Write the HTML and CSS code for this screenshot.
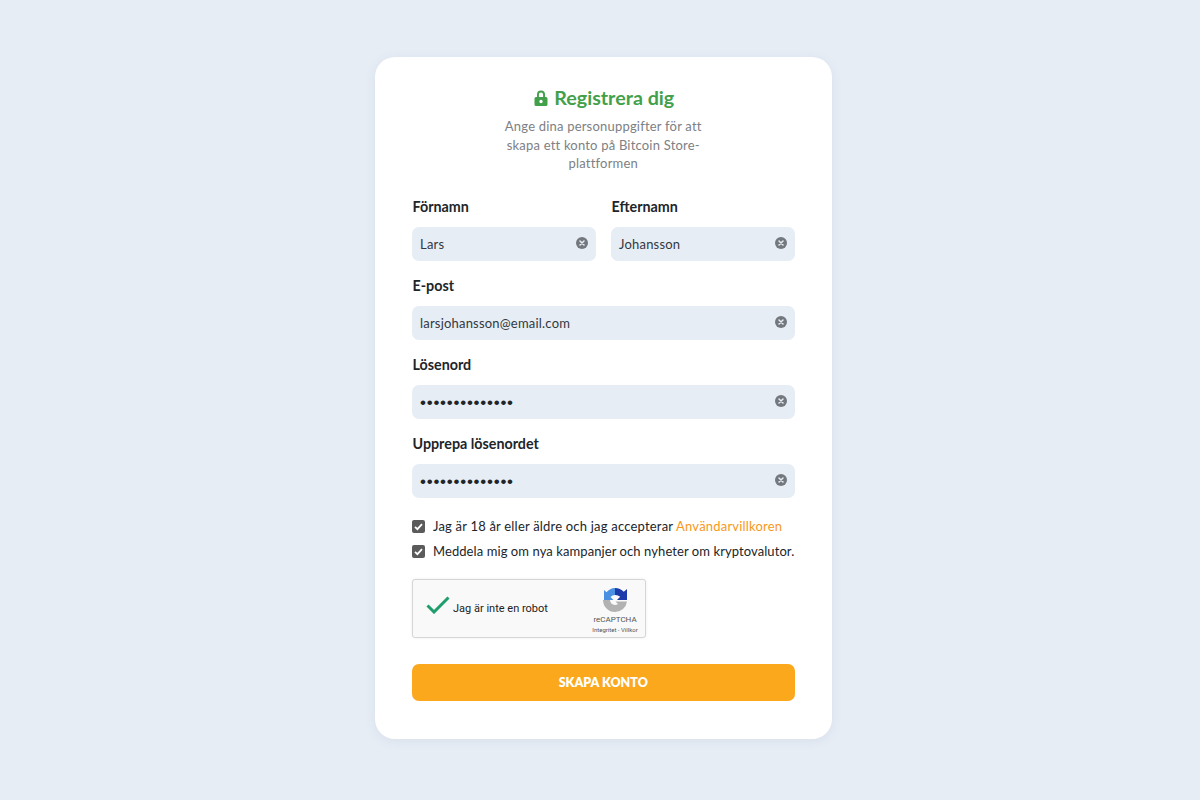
FILE: index.html
```html
<!DOCTYPE html>
<html lang="sv">
<head>
<meta charset="utf-8">
<title>Registrera dig</title>
<link rel="stylesheet" href="styles.css">
</head>
<body>
<main class="card">
  <header class="head">
    <h1 class="title">
      <svg class="lock" viewBox="0 0 14 16" width="14" height="16"><path fill="#43a04a" d="M3 7V4.5a4 4 0 0 1 8 0V7h1a1.500 1.500 0 0 1 1.500 1.500v6A1.500 1.500 0 0 1 12 16H2a1.500 1.500 0 0 1-1.500-1.500v-6A1.500 1.500 0 0 1 2 7zm1.900 0h4.200V4.500a2.100 2.100 0 0 0-4.200 0zM7 9.800a1.700 1.700 0 1 0 0 3.400 1.700 1.700 0 0 0 0-3.400z" fill-rule="evenodd"/></svg>
      Registrera dig
    </h1>
    <p class="sub">Ange dina personuppgifter för att skapa ett konto på Bitcoin Store-plattformen</p>
  </header>

  <div class="row">
    <div class="field">
      <label class="label">Förnamn</label>
      <div class="input"><span class="value">Lars</span><svg class="clear" viewBox="0 0 12 12"><circle cx="6" cy="6" r="6" fill="#73787e"/><path d="M4 4l4 4M8 4l-4 4" stroke="#e6edf5" stroke-width="1.500" stroke-linecap="round"/></svg></div>
    </div>
    <div class="field">
      <label class="label">Efternamn</label>
      <div class="input"><span class="value">Johansson</span><svg class="clear" viewBox="0 0 12 12"><circle cx="6" cy="6" r="6" fill="#73787e"/><path d="M4 4l4 4M8 4l-4 4" stroke="#e6edf5" stroke-width="1.500" stroke-linecap="round"/></svg></div>
    </div>
  </div>
  <div class="field">
    <label class="label">E-post</label>
    <div class="input"><span class="value">larsjohansson@email.com</span><svg class="clear" viewBox="0 0 12 12"><circle cx="6" cy="6" r="6" fill="#73787e"/><path d="M4 4l4 4M8 4l-4 4" stroke="#e6edf5" stroke-width="1.500" stroke-linecap="round"/></svg></div>
  </div>
  <div class="field">
    <label class="label">Lösenord</label>
    <div class="input"><span class="value dots">••••••••••••••</span><svg class="clear" viewBox="0 0 12 12"><circle cx="6" cy="6" r="6" fill="#73787e"/><path d="M4 4l4 4M8 4l-4 4" stroke="#e6edf5" stroke-width="1.500" stroke-linecap="round"/></svg></div>
  </div>
  <div class="field">
    <label class="label">Upprepa lösenordet</label>
    <div class="input"><span class="value dots">••••••••••••••</span><svg class="clear" viewBox="0 0 12 12"><circle cx="6" cy="6" r="6" fill="#73787e"/><path d="M4 4l4 4M8 4l-4 4" stroke="#e6edf5" stroke-width="1.500" stroke-linecap="round"/></svg></div>
  </div>

  <div class="checks">
    <div class="check">
      <svg class="box" viewBox="0 0 13 13"><rect width="13" height="13" rx="2" fill="#5b5b5b"/><path d="M3 6.800l2.400 2.400L10 4.200" fill="none" stroke="#fff" stroke-width="1.800"/></svg>
      <span>Jag är 18 år eller äldre och jag accepterar <a class="link">Användarvillkoren</a></span>
    </div>
    <div class="check check-tight">
      <svg class="box" viewBox="0 0 13 13"><rect width="13" height="13" rx="2" fill="#5b5b5b"/><path d="M3 6.800l2.400 2.400L10 4.200" fill="none" stroke="#fff" stroke-width="1.800"/></svg>
      <span>Meddela mig om nya kampanjer och nyheter om kryptovalutor.</span>
    </div>
  </div>

  <div class="captcha">
    <svg class="tick" viewBox="0 0 24 18" width="24" height="18"><path d="M1.500 9.500l6.500 6.500L22.500 1.500" fill="none" stroke="#1f9d6b" stroke-width="3"/></svg>
    <span class="robot">Jag är inte en robot</span>
    <div class="brand">
      <svg class="recap" viewBox="0 0 24 24" width="24" height="24">
        <path fill="#1c3aa9" d="M12 0a12 12 0 0 1 8.800 3.800L24 1v11H14l3.200-3.200A7.500 7.500 0 0 0 12 7z"/>
        <path fill="#4a90e2" d="M12 0v7a7 7 0 0 0-4.500 2L10.500 12H1V11.500V2l2.500 2.200A12 12 0 0 1 12 0z"/>
        <path fill="#b2b2b2" d="M0 12h7a5.500 5.500 0 0 0 5 5 6 6 0 0 0 3-1l-2.500-2.500H24a12 12 0 0 1-12 10.500A12 12 0 0 1 0 12z"/>
      </svg>
      <span class="recap-name">reCAPTCHA</span>
      <span class="recap-links">Integritet - Villkor</span>
    </div>
  </div>

  <button class="submit" type="button">SKAPA KONTO</button>
</main>
</body>
</html>
```
FILE: styles.css
```css
* { box-sizing: border-box; }
html, body { margin: 0; height: 800px; overflow: hidden; }
body {
  background: #e6edf5;
  font-family: Lato, "Noto Sans", sans-serif;
  color: #212529;
  display: flex;
  justify-content: center;
  padding: 57px 0 0 6px;
}
.card {
  width: 457px;
  height: 682px;
  background: #fff;
  border-radius: 20px;
  padding: 28px 37px 0 37.5px;
  box-shadow: 0 2px 12px rgba(60, 80, 110, .08);
}
.head { text-align: center; margin-bottom: 24.500px; }
.title {
  margin: 0;
  height: 26px;
  padding-left: 2px;
  font-size: 19.700px;
  line-height: 26px;
  font-weight: 700;
  color: #43a04a;
  display: flex;
  justify-content: center;
  align-items: center;
  gap: 6px;
}
.sub {
  margin: 6px auto 0;
  width: 215px;
  font-size: 13px;
  line-height: 18.500px;
  letter-spacing: .2px;
  color: #7d8084;
}
.row { display: grid; grid-template-columns: 184px 184px; gap: 15px; }
.field { margin-bottom: 15px; }
.label {
  display: block;
  height: 20px;
  line-height: 20px;
  padding-left: .5px;
  font-size: 14.300px;
  font-weight: 700;
  color: #212529;
  margin-bottom: 10px;
}
.input {
  height: 34px;
  background: #e6edf5;
  border-radius: 7px;
  display: flex;
  align-items: center;
  justify-content: space-between;
  padding: 0 8px 2px 8px;
}
.value { font-size: 13px; letter-spacing: .2px; color: #33383d; padding-top: 2px; }
.dots { font-size: 17px; letter-spacing: .75px; padding-top: 3px; color: #212529; font-family: "Liberation Sans", sans-serif; }
.clear { width: 12px; height: 12px; flex: none; }
.checks { margin-top: 19px; display: flex; flex-direction: column; gap: 7px; }
.check {
  display: flex;
  align-items: center;
  gap: 8px;
  height: 18px;
  font-size: 13px;
  letter-spacing: .2px;
  color: #212529;
  white-space: nowrap;
}
.check-tight { letter-spacing: .08px; }
.box { width: 13px; height: 13px; flex: none; }
.link { color: #f7981c; }
.captcha {
  margin-top: 19px;
  width: 234px;
  height: 59px;
  background: #f9f9f9;
  border: 1px solid #d6d6d6;
  border-radius: 3px;
  box-shadow: 0 0 3px rgba(0, 0, 0, .08);
  display: flex;
  align-items: center;
  padding-left: 13px;
  font-family: Roboto, sans-serif;
}
.tick { flex: none; margin-top: -8px; }
.robot { font-size: 11px; margin-left: 3px; color: #222; }
.brand {
  margin-left: auto;
  width: 54px;
  margin-right: 3px;
  margin-top: 4px;
  display: flex;
  flex-direction: column;
  align-items: center;
  color: #555;
}
.recap { margin-top: 1px; }
.recap-name { font-size: 8px; line-height: 10px; margin-top: 3px; }
.recap-links { font-size: 6px; line-height: 8px; margin-top: 1px; white-space: nowrap; }
.submit {
  display: block;
  width: 100%;
  height: 37px;
  margin-top: 26px;
  border: 0;
  border-radius: 7px;
  background: #fba81c;
  color: #fff;
  font-family: inherit;
  font-size: 12.500px;
  font-weight: 800;
}
```
